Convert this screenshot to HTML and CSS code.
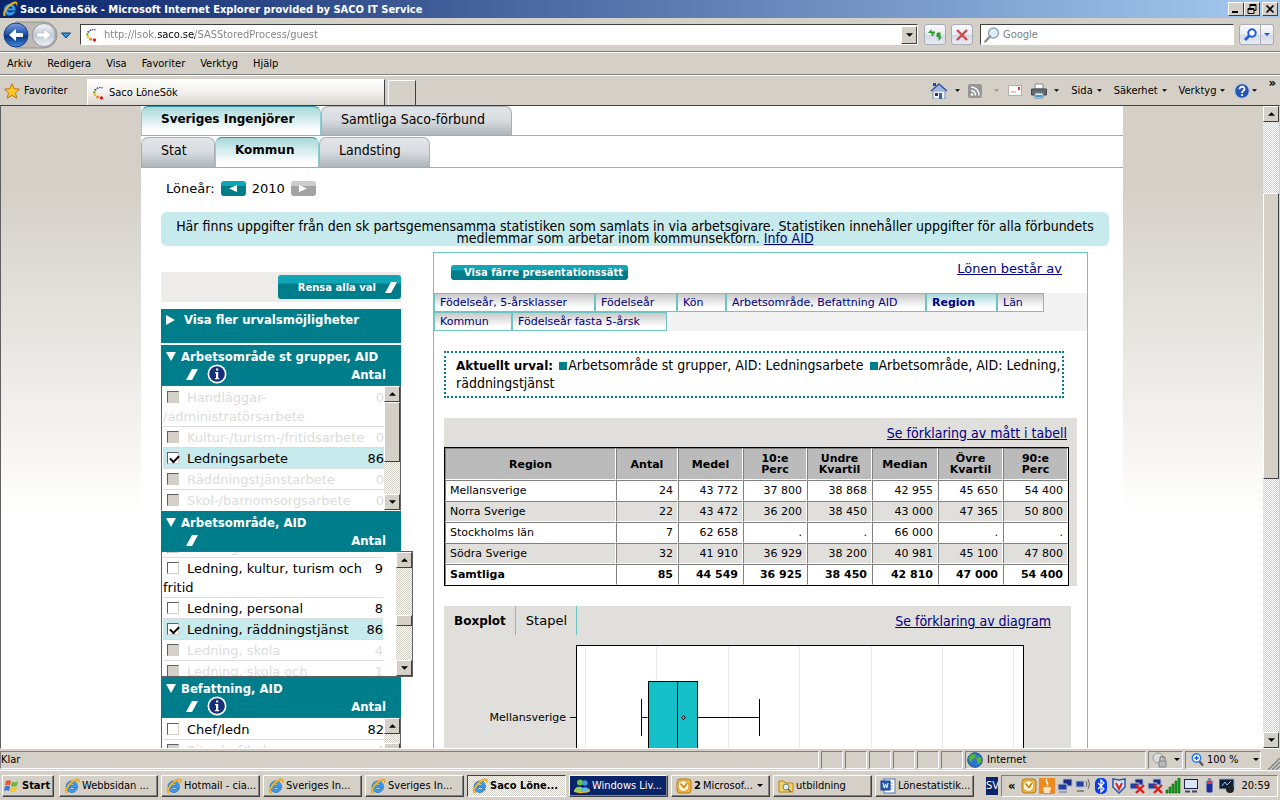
FILE: index.html
```html
<!DOCTYPE html>
<html lang="sv">
<head>
<meta charset="utf-8">
<title>Saco LöneSök</title>
<link rel="stylesheet" href="styles.css">
</head>
<body>
<svg class="defs" aria-hidden="true">
  <defs>
    <linearGradient id="navblue" x1="0" y1="0" x2="0" y2="1"><stop offset="0" stop-color="#7ba0dc"/><stop offset=".45" stop-color="#2355ad"/><stop offset=".55" stop-color="#0b3684"/><stop offset="1" stop-color="#3f8be0"/></linearGradient>
    <linearGradient id="navgray" x1="0" y1="0" x2="0" y2="1"><stop offset="0" stop-color="#f4f6fa"/><stop offset=".5" stop-color="#c3cad6"/><stop offset="1" stop-color="#eef2f8"/></linearGradient>
    <symbol id="ie" viewBox="0 0 16 16">
      <path d="M13.500 9.500H5.500c.2 1.300 1.200 2 2.500 2 1 0 1.800-.3 2.300-.9h3C12.500 13 10.500 14.500 8 14.500c-3.500 0-6-2.400-6-5.800S4.500 3 8 3s5.700 2.500 5.500 6.500zM5.600 7.300h4.800C10.200 6.200 9.300 5.600 8 5.600s-2.200.6-2.400 1.700z" fill="#3a9cee" stroke="#1660b0" stroke-width=".6"/>
      <path d="M1.800 14.800C-.4 12.500 4 5 9 2.200 12 .5 15.300.2 15.300 2.400c0 .8-.3 1.700-.8 2.600.3-1.500 0-2.500-1.200-2.500C10 2.500 3.300 9 2.800 12.800c-.1.900.2 1.500 1 1.700-.6.600-1.400.8-2 .3z" fill="#f5bd2a" stroke="#c98a10" stroke-width=".4"/>
    </symbol>
    <symbol id="saco" viewBox="0 0 14 14">
      <circle cx="10" cy="1.700" r=".7" fill="#4a2a7a"/><circle cx="7.800" cy="1.600" r=".8" fill="#63308c"/><circle cx="5.500" cy="2.200" r=".9" fill="#2b56a8"/><circle cx="3.400" cy="3.800" r="1.100" fill="#2e7d4a"/><circle cx="2.300" cy="6.400" r="1.200" fill="#6aa02c"/><circle cx="3" cy="9" r="1.300" fill="#f0c020"/><circle cx="5.600" cy="11" r="1.500" fill="#ee7a1c"/><circle cx="9.500" cy="12" r="1.700" fill="#d81e1e"/>
    </symbol>
    <symbol id="info" viewBox="0 0 20 20"><circle cx="10" cy="10" r="9.500" fill="#fff"/><circle cx="10" cy="10" r="7.800" fill="#152f78"/><path d="M9 4.600h2.200v2H9zM8 8h3.200v6h1v1.200H7.800V14H9V9.200H8z" fill="#fff"/></symbol>
    <symbol id="eraser" viewBox="0 0 12 11"><path d="M6 0h6L6 11H0z" fill="#fff"/></symbol>
    <symbol id="lens" viewBox="0 0 16 16"><circle cx="9.500" cy="6" r="5" fill="#dcecf8" stroke="#8fa6b8" stroke-width="1.400"/><path d="M6 9.500L1.300 14.500" stroke="#8a8a8a" stroke-width="2.400" stroke-linecap="round"/></symbol>
    <symbol id="up" viewBox="0 0 8 4"><path d="M4 0l4 4H0z"/></symbol>
    <symbol id="down" viewBox="0 0 8 4"><path d="M0 0h8L4 4z"/></symbol>
    <symbol id="outlook" viewBox="0 0 16 16"><rect x="1" y="1" width="14" height="14" rx="3" fill="#f0b440" stroke="#b87a18"/><circle cx="7.500" cy="8" r="5.500" fill="#fff3cf" stroke="#d89a30"/><path d="M4.500 5.500L8 9.500l3-4.500" fill="none" stroke="#c47d10" stroke-width="1.500"/></symbol>
    <symbol id="net" viewBox="0 0 16 16"><path d="M6 1h9v7H6z" fill="#182c86" stroke="#a9b8d8"/><path d="M1 6h9v6H1z" fill="#24409c" stroke="#b9c4dc"/><path d="M2 13h8v2H2z" fill="#9aa3b5"/></symbol>
    <symbol id="netoff" viewBox="0 0 16 16"><path d="M6 1h8v6H6z" fill="#182c86" stroke="#a9b8d8"/><path d="M1 5h9v6H1z" fill="#24409c" stroke="#b9c4dc"/><path d="M7 7l8 8M15 7l-8 8" stroke="#e01c1c" stroke-width="2.400"/></symbol>
  </defs>
</svg>

<div class="window">
  <header class="titlebar">
    <svg class="ico16"><use href="#ie"/></svg>
    <h1 class="title">Saco LöneSök - Microsoft Internet Explorer provided by SACO IT Service</h1>
    <div class="winbtns">
      <button class="wbtn" aria-label="Minimera"><svg width="10" height="10" viewBox="0 0 10 10"><path d="M1 7h6v2H1z"/></svg></button>
      <button class="wbtn" aria-label="Återställ"><svg width="10" height="10" viewBox="0 0 10 10"><path d="M3 .5h6v6H7M3 1.500h6M1 4.500h6v5H1zM1 5.500h6M3 0v4" fill="none" stroke="#000"/></svg></button>
      <button class="wbtn wclose" aria-label="Stäng"><svg width="10" height="10" viewBox="0 0 10 10"><path d="M1.500 1.500l7 7M8.500 1.500l-7 7" stroke="#000" stroke-width="1.600"/></svg></button>
    </div>
  </header>

  <div class="addressbar">
    <div class="nav">
      <svg class="navart" width="72" height="28" viewBox="0 0 72 28" aria-hidden="true">
        <path d="M14 1h28a13 13 0 0 1 0 26H14z" fill="#bdb9b2" stroke="#98948d"/>
        <circle cx="14" cy="14" r="12" fill="url(#navblue)" stroke="#1b3f86"/>
        <path d="M7 14l7-6v4h7v4h-7v4z" fill="#fff"/>
        <circle cx="42" cy="14" r="11.500" fill="url(#navgray)" stroke="#8f96a3"/>
        <path d="M49 14l-7-6v4h-7v4h7v4z" fill="#fff" stroke="#a9b1be" stroke-width=".5"/>
        <path d="M59.500 12h9L64 17z" fill="#2aa0e0" stroke="#123a80"/>
      </svg>
    </div>
    <div class="field addr">
      <svg class="ico14"><use href="#saco"/></svg>
      <input class="url" type="text" aria-label="Adress" value="http://lsok.saco.se/SASStoredProcess/guest">
      <button class="drop" aria-label="Visa adresser"><svg width="7" height="4"><use href="#down"/></svg></button>
    </div>
    <button class="glass" aria-label="Uppdatera"><svg width="16" height="16" viewBox="0 0 16 16"><path d="M1 6l3.500-4v2.500H8v2H6.500V9h-2V6zM15 10l-3.500 4v-2.500V10h-2V7.500c0-1.500 1-2 2-2h2V10z" fill="#2c9a2c"/></svg></button>
    <button class="glass" aria-label="Stoppa"><svg width="14" height="14" viewBox="0 0 14 14"><path d="M2 2l10 10M12 2L2 12" stroke="#d04848" stroke-width="2.400"/></svg></button>
    <div class="field search">
      <svg class="ico16"><use href="#lens"/></svg>
      <input class="query" type="search" aria-label="Sök" placeholder="Google">
    </div>
    <div class="searchbtns">
      <button class="glass" aria-label="Sök"><svg width="13" height="13" viewBox="0 0 13 13"><circle cx="8" cy="5" r="3.700" fill="#fff" stroke="#1a5ae0" stroke-width="2"/><path d="M5 8l-4 4" stroke="#1a5ae0" stroke-width="2.600"/></svg></button><button class="glass narrow" aria-label="Sökalternativ"><svg width="6" height="3" class="bluefill"><use href="#down"/></svg></button>
    </div>
  </div>

  <nav class="menubar" aria-label="Meny">
    <button>Arkiv</button><button>Redigera</button><button>Visa</button><button>Favoriter</button><button>Verktyg</button><button>Hjälp</button>
  </nav>

  <div class="tabbar">
    <button class="fav"><svg class="ico16" viewBox="0 0 16 16"><path d="M8 .8l2.200 4.900 5.200.5-3.900 3.600 1.200 5.400L8 12.400l-4.700 2.800 1.200-5.400L.6 6.200l5.200-.5z" fill="#ffc627" stroke="#b9790c"/></svg>Favoriter</button>
    <div class="btab"><svg class="ico14"><use href="#saco"/></svg>Saco LöneSök</div>
    <div class="newtab"></div>
    <div class="commands">
      <svg width="18" height="16" viewBox="0 0 18 16"><path d="M3 8h12v8H3z" fill="#eef2fa" stroke="#7d8fb5"/><path d="M1 8l8-7 8 7" fill="#9cb6e0" stroke="#3a5596" stroke-width="1.500"/><path d="M9 10h3v6H9z" fill="#2f66ae"/><path d="M5 10h3v3H5z" fill="#335"/><path d="M3 0h3v3H3z" fill="#24c"/></svg>
      <svg class="caret" width="5" height="3"><use href="#down"/></svg>
      <svg class="rss" width="14" height="14" viewBox="0 0 14 14"><rect width="14" height="14" rx="2" fill="#969696"/><circle cx="4" cy="10.500" r="1.300" fill="#fff"/><path d="M3 6.500a4.500 4.500 0 0 1 4.500 5M3 3a8 8 0 0 1 8 8.500" fill="none" stroke="#fff" stroke-width="1.500"/></svg>
      <svg class="caret dim" width="5" height="3"><use href="#down"/></svg>
      <svg class="mail" width="14" height="11" viewBox="0 0 14 11"><rect x=".5" y=".5" width="13" height="10" fill="#fafafa" stroke="#b5b0a8"/><path d="M10 2h2v3h-2z" fill="#d33"/><path d="M3 7h5" stroke="#aaa"/></svg>
      <svg class="print" width="16" height="16" viewBox="0 0 16 16"><path d="M4 1h8v5H4z" fill="#fff" stroke="#888"/><path d="M.5 6h15v6H.5z" fill="#646b76" stroke="#444"/><path d="M4 10h8v5H4z" fill="#e4f2f7" stroke="#6d8a96"/><path d="M5 12h6v2H5z" fill="#3a9ad0"/></svg>
      <svg class="caret" width="5" height="3"><use href="#down"/></svg>
      <button class="cmd">Sida<svg width="5" height="3"><use href="#down"/></svg></button>
      <button class="cmd">Säkerhet<svg width="5" height="3"><use href="#down"/></svg></button>
      <button class="cmd">Verktyg<svg width="5" height="3"><use href="#down"/></svg></button>
      <button class="cmd help" aria-label="Hjälp"><svg width="16" height="16" viewBox="0 0 16 16"><circle cx="8" cy="8" r="7.300" fill="#2456b8" stroke="#c3cde0"/><path d="M5.500 6.300C5.500 2.800 10.800 3 10.500 6.200 10.300 8 8 7.900 8 10M8 11.300v1.800" fill="none" stroke="#fff" stroke-width="1.800"/></svg><svg width="5" height="3"><use href="#down"/></svg></button>
      <span class="chev">»</span>
    </div>
  </div>

  <div class="viewport">
    <div class="canvas">
      <main class="page">
        <nav class="tabs" aria-label="Förbund">
          <a href="#" class="tab t180 on">Sveriges Ingenjörer</a><a href="#" class="tab t190">Samtliga Saco-förbund</a>
        </nav>
        <nav class="tabs second" aria-label="Sektor">
          <a href="#" class="tab t74">Stat</a><a href="#" class="tab t104 on">Kommun</a><a href="#" class="tab t111">Landsting</a>
        </nav>
        <div class="year">
          <span>Löneår:</span>
          <button class="step" aria-label="Föregående år"><svg width="8" height="8" viewBox="0 0 8 8"><path d="M8 0v7L0 3.500z" fill="#fff"/></svg></button>
          <span>2010</span>
          <button class="step off" aria-label="Nästa år" disabled><svg width="8" height="8" viewBox="0 0 8 8"><path d="M0 0v7l8-3.500z" fill="#fff"/></svg></button>
        </div>
        <p class="notice">Här finns uppgifter från den sk partsgemensamma statistiken som samlats in via arbetsgivare. Statistiken innehåller uppgifter för alla förbundets<br>medlemmar som arbetar inom kommunsektorn. <a href="#">Info AID</a></p>

        <div class="columns">
          <aside class="filters">
            <div class="clearbar"><button class="clear">Rensa alla val<svg width="12" height="11"><use href="#eraser"/></svg></button></div>
            <button class="more"><svg width="9" height="10" viewBox="0 0 9 10"><path d="M0 0l9 5-9 5z" fill="#fff"/></svg>Visa fler urvalsmöjligheter</button>

            <section>
              <div class="fhead"><h2><svg width="10" height="9" viewBox="0 0 10 9"><path d="M0 0h10L5 9z" fill="#fff"/></svg>Arbetsområde st grupper, AID</h2><div class="fsub"><svg width="12" height="11"><use href="#eraser"/></svg><svg width="20" height="20"><use href="#info"/></svg><span>Antal</span></div></div>
              <div class="list">
                <ul>
                  <li class="dis"><label><input type="checkbox" disabled>Handläggar-<wbr>/administratörsarbete</label><span>0</span></li>
                  <li class="dis"><label><input type="checkbox" disabled>Kultur-/turism-/fritidsarbete</label><span>0</span></li>
                  <li class="sel"><label><input type="checkbox" checked>Ledningsarbete</label><span>86</span></li>
                  <li class="dis"><label><input type="checkbox" disabled>Räddningstjänstarbete</label><span>0</span></li>
                  <li class="dis"><label><input type="checkbox" disabled>Skol-/barnomsorgsarbete</label><span>0</span></li>
                </ul>
                <div class="sb" aria-hidden="true"><i class="sbb"><svg width="7" height="4"><use href="#up"/></svg></i><i class="thumb big"></i><i class="fill"></i><i class="sbb"><svg width="7" height="4"><use href="#down"/></svg></i></div>
              </div>
            </section>

            <section>
              <div class="fhead"><h2><svg width="10" height="9" viewBox="0 0 10 9"><path d="M0 0h10L5 9z" fill="#fff"/></svg>Arbetsområde, AID</h2><div class="fsub"><svg width="12" height="11"><use href="#eraser"/></svg><span>Antal</span></div></div>
              <div class="list wide">
                <ul class="scrolled">
                  <li class="dis"><label><input type="checkbox" disabled>Ledning, information</label></li>
                  <li><label><input type="checkbox">Ledning, kultur, turism och fritid</label><span>9</span></li>
                  <li><label><input type="checkbox">Ledning, personal</label><span>8</span></li>
                  <li class="sel"><label><input type="checkbox" checked>Ledning, räddningstjänst</label><span>86</span></li>
                  <li class="dis"><label><input type="checkbox" disabled>Ledning, skola</label><span>4</span></li>
                  <li class="dis"><label><input type="checkbox" disabled>Ledning, skola och</label><span>1</span></li>
                </ul>
                <div class="sb" aria-hidden="true"><i class="sbb"><svg width="7" height="4"><use href="#up"/></svg></i><i class="fill"></i><i class="thumb small"></i><i class="fill after"></i><i class="sbb"><svg width="7" height="4"><use href="#down"/></svg></i></div>
              </div>
            </section>

            <section>
              <div class="fhead"><h2><svg width="10" height="9" viewBox="0 0 10 9"><path d="M0 0h10L5 9z" fill="#fff"/></svg>Befattning, AID</h2><div class="fsub"><svg width="12" height="11"><use href="#eraser"/></svg><svg width="20" height="20"><use href="#info"/></svg><span>Antal</span></div></div>
              <div class="list">
                <ul>
                  <li><label><input type="checkbox">Chef/ledn</label><span>82</span></li>
                  <li class="dis"><label><input type="checkbox" disabled>Bitr chef/ledn</label><span>4</span></li>
                </ul>
                <div class="sb" aria-hidden="true"><i class="sbb"><svg width="7" height="4"><use href="#up"/></svg></i><i class="fill gap"></i><i class="thumb big"></i></div>
              </div>
            </section>
          </aside>

          <section class="panel">
            <div class="ptop"><button class="fewer">Visa färre presentationssätt</button><a href="#">Lönen består av</a></div>
            <nav class="subtabs" aria-label="Presentationssätt">
              <a href="#" class="w161">Födelseår, 5-årsklasser</a><a href="#" class="w82">Födelseår</a><a href="#" class="w49">Kön</a><a href="#" class="w200">Arbetsområde, Befattning AID</a><a href="#" class="w71 on">Region</a><a href="#" class="w47">Län</a><a href="#" class="w78">Kommun</a><a href="#" class="w155">Födelseår fasta 5-årsk</a>
            </nav>
            <p class="current"><b>Aktuellt urval:</b> <i class="sq"></i>Arbetsområde st grupper, AID: Ledningsarbete <i class="sq"></i>Arbetsområde, AID: Ledning,<br>räddningstjänst</p>
            <div class="tablebox">
              <a href="#">Se förklaring av mått i tabell</a>
              <table>
                <colgroup><col><col class="c62"><col class="c65"><col class="c64"><col class="c65"><col class="c66"><col class="c65"><col class="c65"></colgroup>
                <thead><tr><th>Region</th><th>Antal</th><th>Medel</th><th>10:e Perc</th><th>Undre Kvartil</th><th>Median</th><th>Övre Kvartil</th><th>90:e Perc</th></tr></thead>
                <tbody>
                  <tr><td>Mellansverige</td><td>24</td><td>43 772</td><td>37 800</td><td>38 868</td><td>42 955</td><td>45 650</td><td>54 400</td></tr>
                  <tr><td>Norra Sverige</td><td>22</td><td>43 472</td><td>36 200</td><td>38 450</td><td>43 000</td><td>47 365</td><td>50 800</td></tr>
                  <tr><td>Stockholms län</td><td>7</td><td>62 658</td><td>.</td><td>.</td><td>66 000</td><td>.</td><td>.</td></tr>
                  <tr><td>Södra Sverige</td><td>32</td><td>41 910</td><td>36 929</td><td>38 200</td><td>40 981</td><td>45 100</td><td>47 800</td></tr>
                </tbody>
                <tfoot><tr><td>Samtliga</td><td>85</td><td>44 549</td><td>36 925</td><td>38 450</td><td>42 810</td><td>47 000</td><td>54 400</td></tr></tfoot>
              </table>
            </div>
            <div class="chartbox">
              <div class="charttop"><button class="on">Boxplot</button><button>Stapel</button><a href="#">Se förklaring av diagram</a></div>
              <svg class="chart" width="627" height="220" viewBox="0 0 627 220" role="img" aria-label="Boxplot Mellansverige">
                <rect x="132.500" y="10.500" width="447" height="230" fill="#fff" stroke="#000"/>
                <path d="M141.500 11v209M212.500 11v209M284.500 11v209M355.500 11v209M427.500 11v209M498.500 11v209M569.500 11v209" stroke="#e8e8e8"/>
                <path d="M126 82.500h6M197.500 64v37M197.500 82.500h6M254 82.500h61M315.500 64v37" stroke="#000"/>
                <rect x="204.500" y="46.500" width="49" height="72" fill="#15c0c9" stroke="#000"/>
                <path d="M233.500 46v72" stroke="#000"/>
                <path d="M239.500 80.500l2 2-2 2-2-2z" fill="none" stroke="#000"/>
                <text x="122" y="86" text-anchor="end">Mellansverige</text>
              </svg>
            </div>
          </section>
        </div>
      </main>
    </div>
    <div class="sb main" aria-hidden="true"><i class="sbb"><svg width="7" height="4"><use href="#up"/></svg></i><i class="fill top"></i><i class="thumb huge"></i><i class="fill"></i><i class="sbb"><svg width="7" height="4"><use href="#down"/></svg></i></div>
  </div>

  <footer class="status">
    <div class="pane grow">Klar</div><div class="pane p22"></div><div class="pane p22"></div><div class="pane p22"></div><div class="pane p22"></div><div class="pane p22"></div><div class="pane p22"></div>
    <div class="pane zone"><svg class="ico16" viewBox="0 0 16 16"><circle cx="8" cy="8" r="7.300" fill="#2a75cf" stroke="#1d4e90"/><path d="M3 3c3-2 6-1 6 1S6 6 5 9 2 8 1.500 6zM10 5c2-1 4 0 4.500 2s-1 5-3 5-1-3-2-4 0-3 .5-3z" fill="#58b33c"/></svg>Internet</div>
    <div class="pane lock"><svg class="ico16" viewBox="0 0 16 16"><circle cx="6" cy="6" r="5" fill="#ddd" stroke="#999"/><path d="M8 9v-2a2.500 2.500 0 0 1 5 0v2" fill="none" stroke="#888" stroke-width="1.500"/><path d="M7 9h7v6H7z" fill="#b9b9b9" stroke="#888"/></svg><svg width="6" height="3"><use href="#down"/></svg></div>
    <div class="pane zoom"><svg width="13" height="14" viewBox="0 0 13 14"><circle cx="5.500" cy="5" r="4.200" fill="#e6f2ff" stroke="#2c7be0" stroke-width="1.500"/><path d="M3.500 5h4M5.500 3v4" stroke="#1a5ae0" stroke-width="1.300"/><path d="M8.500 8.500l3.500 4" stroke="#555" stroke-width="2.200"/></svg><span>100 %</span><svg width="6" height="3"><use href="#down"/></svg></div>
    <svg class="grip" width="12" height="12" viewBox="0 0 12 12"><path d="M0 12L12 0M4 12l8-8M8 12l4-4" stroke="#808080" stroke-width="1.500"/></svg>
  </footer>

  <div class="taskbar">
    <button class="start"><svg class="ico16" viewBox="0 0 16 16"><path d="M2 3c2-1.300 3.500-1 5 0L6 7.500c-1.500-1-3-1-5 0z" fill="#e8532b"/><path d="M8 3.500c2 1 4 1 6 0L13 8c-2 1-4 1-6 0z" fill="#6fb83a"/><path d="M1 8.500c2-1.200 3.500-1 5 0L5 13c-1.500-1-3-1-5 0z" fill="#3a76d8"/><path d="M7 9c2 1 4 1 6 0l-1 4.500c-2 1-4 1-6 0z" fill="#f7c52c"/></svg>Start</button>
    <button class="task"><svg class="ico16"><use href="#ie"/></svg>Webbsidan ...</button>
    <button class="task"><svg class="ico16"><use href="#ie"/></svg>Hotmail - cia...</button>
    <button class="task"><svg class="ico16"><use href="#ie"/></svg>Sveriges In...</button>
    <button class="task"><svg class="ico16"><use href="#ie"/></svg>Sveriges In...</button>
    <button class="task pressed"><svg class="ico16"><use href="#ie"/></svg>Saco Löne...</button>
    <button class="task alert"><svg class="ico16" viewBox="0 0 16 16"><circle cx="6" cy="4.500" r="3" fill="#6cc04a"/><circle cx="11" cy="5" r="2.700" fill="#3a9de0"/><path d="M0 13c1-5 8-6 10-1 0 2-8 3-10 1z" fill="#8ad05c"/><path d="M7 13c0-5 8-5 9 0-1 2-8 2-9 0z" fill="#5ab8f0"/><path d="M0 13c4 2 12 2 16-1" stroke="#f5b32a" stroke-width="1.500" fill="none"/></svg>Windows Liv...</button>
    <button class="task"><svg class="ico16"><use href="#outlook"/></svg><b>2</b> Microsof...<svg class="tcaret" width="6" height="3"><use href="#down"/></svg></button>
    <button class="task"><svg class="ico16" viewBox="0 0 16 16"><path d="M1 3h5l1 2h8v9H1z" fill="#f6d365" stroke="#b8860b"/><circle cx="8" cy="9" r="3" fill="#d8eefc" stroke="#777"/><path d="M10 11l3 3" stroke="#666" stroke-width="1.500"/></svg>utbildning</button>
    <button class="task"><svg class="ico16" viewBox="0 0 16 16"><rect x="4" y="1" width="11" height="14" fill="#fff" stroke="#5577b5"/><path d="M7 5h6M7 8h6M7 11h6" stroke="#9ab"/><rect x="1" y="3" width="9" height="9" fill="#2b5cb8" stroke="#163c85"/><path d="M3 5l1.300 5L5.500 6l1.300 4L8 5" stroke="#fff" fill="none"/></svg>Lönestatistik...</button>
    <span class="lang">SV</span>
    <div class="tray">
      <span class="chev2">«</span>
      <svg class="ico16"><use href="#outlook"/></svg>
      <svg class="ico16" viewBox="0 0 16 16"><rect width="16" height="16" rx="1" fill="#ee8a1e"/><path d="M8 1c-3 3 3 4 0 7M4 10h8M4.500 12h7M5 14h6" stroke="#fff" fill="none" stroke-width="1.300"/></svg>
      <svg class="ico16"><use href="#net"/></svg>
      <svg class="ico16" viewBox="0 0 16 16"><path d="M1 3h8v6H1z" fill="#24409c" stroke="#a9b8d8"/><path d="M2 12h7v2H2z" fill="#889"/><path d="M11 3q2 3 0 6M13 1q3 5 0 10" fill="none" stroke="#666"/></svg>
      <svg class="ico16" viewBox="0 0 16 16"><rect x="2" y="0" width="12" height="16" rx="5" fill="#0a3cf0"/><path d="M5 5l6 6-3 3V2l3 3-6 6" fill="none" stroke="#fff" stroke-width="1.200"/></svg>
      <svg class="ico16" viewBox="0 0 16 16"><path d="M2 1l6 1 6-1v8l-6 6-6-6z" fill="#d8e4f4" stroke="#2f5ba8" stroke-width="1.600"/><path d="M5 5l3 6 3-6" stroke="#d22" stroke-width="2" fill="none"/></svg>
      <svg class="ico16"><use href="#netoff"/></svg>
      <svg class="ico16"><use href="#netoff"/></svg>
      <svg class="ico16" viewBox="0 0 16 16"><path d="M1 12h2v3H1zM4 9h2v6H4zM7 6h2v9H7zM10 3h2v12h-2zM13 0h2v15h-2z" fill="#16a81e" stroke="#075c0c" stroke-width=".6"/></svg>
      <svg class="ico16" viewBox="0 0 16 16"><rect x="1.500" y="1.500" width="13" height="9" fill="#d8e6f8" stroke="#224"/><path d="M2 13.500h5M9 13.500h5" stroke="#446" stroke-width="2"/></svg>
      <svg class="ico16" viewBox="0 0 16 16"><rect x="5" y="2" width="7" height="13" rx="2" fill="#1c2f9a" stroke="#ccc"/><path d="M6 3h5v3H6z" fill="#e33"/><path d="M7 0h3v2H7z" fill="#888"/></svg>
      <svg class="ico16" viewBox="0 0 16 16"><path d="M0 1h15v10H0z" fill="#111c38" stroke="#8fb0c8"/><path d="M3 8l3-4 2 3 4-4" stroke="#7fd0f0" fill="none"/><circle cx="11" cy="11" r="4" fill="#222"/></svg>
      <time>20:59</time>
    </div>
  </div>
</div>
</body>
</html>
```
FILE: styles.css
```css
* { box-sizing: border-box; }
body { margin: 0; font-family: "DejaVu Sans", Verdana, sans-serif; font-size: 13px; color: #000; }
button, input { font: inherit; color: inherit; margin: 0; padding: 0; border: 0; background: none; border-radius: 0; }
svg { flex: none; display: block; }
a { color: #000080; }
.defs { position: absolute; width: 0; height: 0; }
.ico16 { width: 16px; height: 16px; }
.ico14 { width: 14px; height: 14px; }

.window { display: flex; flex-direction: column; height: 100vh; overflow: hidden; background: #d4d0c8; }
.titlebar, .addressbar, .menubar, .tabbar, .status, .taskbar { flex: none; display: flex; align-items: center; font-family: "DejaVu Sans Condensed", Tahoma, sans-serif; font-size: 11px; white-space: nowrap; }

/* Title bar */
.titlebar { height: 18px; padding: 0 2px; gap: 2px; background: linear-gradient(90deg, #0a246a, #a6caf0); color: #fff; }
.title { margin: 0; flex: 1; font-size: 11px; font-weight: bold; }
.winbtns { display: flex; }
.wbtn { width: 16px; height: 14px; display: flex; align-items: center; justify-content: center; background: #d4d0c8; border: 1px solid; border-color: #fff #404040 #404040 #fff; }
.wclose { margin-left: 2px; }

/* Address bar */
.addressbar { height: 34px; padding: 0 6px 0 2px; border-bottom: 1px solid #808080; }
.nav { width: 78px; }
.field { display: flex; align-items: center; height: 21px; background: #fff; border: 1px solid; border-color: #404040 #fff #fff #404040; }
.addr { flex: 1; padding-left: 4px; gap: 5px; margin-right: 6px; }
.url { flex: 1; min-width: 0; color: transparent; background: linear-gradient(90deg, #808080 54px, #000 54px, #000 91px, #808080 91px); background-clip: text; -webkit-background-clip: text; }
.drop { width: 16px; height: 18px; display: flex; align-items: center; justify-content: center; background: #d4d0c8; border: 1px solid; border-color: #fff #404040 #404040 #fff; }
.glass { width: 22px; height: 21px; margin-right: 5px; display: flex; align-items: center; justify-content: center; border: 1px solid #a9abb5; border-radius: 3px; background: linear-gradient(#fafafc, #e9ebf2 50%, #d3d7e4 51%, #e8ecf4); }
.search { width: 254px; padding-left: 3px; gap: 3px; margin: 0 5px 0 2px; }
.query { flex: 1; min-width: 0; }
.query::placeholder { color: #808080; opacity: 1; }
.searchbtns { display: flex; }
.searchbtns .glass { margin: 0; border-radius: 3px 0 0 3px; }
.searchbtns .narrow { width: 13px; border-left: 0; border-radius: 0 3px 3px 0; }
.bluefill { fill: #1a5ae0; }

.menubar { height: 23px; padding-left: 7px; gap: 15px; border-top: 1px solid #fff; border-bottom: 1px solid #808080; }
.tabbar { height: 30px; border-top: 1px solid #fff; align-items: stretch; }
.fav { display: flex; align-items: center; gap: 4px; width: 87px; padding-left: 4px; }
.btab { display: flex; align-items: center; gap: 3px; width: 298px; margin-top: 3px; padding-left: 4px; background: linear-gradient(#fdfdfc, #f2f0ed 50%, #d9d5ce); border: 1px solid #fff; border-right: 1px solid #404040; border-bottom: 0; }
.newtab { width: 28px; margin: 4px 0 0 3px; border: 1px solid #fff; border-right: 1px solid #404040; border-bottom: 0; }
.commands { margin-left: auto; display: flex; align-items: center; padding-right: 4px; }
.caret { margin-left: 7px; }
.dim { fill: #909090; margin-left: 12px; }
.rss { margin-left: 8px; }
.mail { margin-left: 9px; }
.print { margin-left: 9px; }
.cmd { display: flex; align-items: center; gap: 4px; margin-left: 12px; }
.help { gap: 2px; margin-left: 9px; }
.chev { align-self: flex-start; margin-left: 11px; font-size: 13px; font-weight: bold; line-height: 13px; }

/* Viewport */
.viewport { flex: 1; min-height: 0; display: flex; border: 1px solid; border-color: #404040 #d4d0c8 #fff #606060; overflow: hidden; }
.canvas { flex: 1; min-width: 0; overflow: hidden; background: linear-gradient(#d4d0c8 80px, #fff 410px); }
.page { width: 982px; margin: 0 auto; min-height: 100%; background: #fff; }

/* Main tabs */
.tabs { display: flex; height: 30px; border-bottom: 1px solid #6cc5c3; }
.second { margin-top: 1px; height: 31px; }
.tab { padding: 4px 0 0 19px; font: 14px/17px "DejaVu Sans Condensed", Verdana, sans-serif; color: #000; text-decoration: none; white-space: nowrap; border: 1px solid #a9b1b6; border-bottom: 0; border-radius: 7px 7px 0 0; background: linear-gradient(#e2e6e9, #d9dde1 45%, #adb5ba); }
.tab.on { font: bold 12px/17px "DejaVu Sans", Verdana, sans-serif; background: linear-gradient(#a9d9db, #fff 85%); border-color: #36939f #8ccdd1 #8ccdd1; }
.t180 { width: 180px; }
.t190 { width: 191px; }
.t74 { width: 74px; }
.t104 { width: 104px; }
.t111 { width: 111px; }

.year { display: flex; align-items: center; gap: 6px; padding: 13px 0 0 25px; height: 28px; line-height: 16px; }
.step { width: 25px; height: 15px; display: flex; align-items: center; justify-content: center; border-radius: 3px; background: linear-gradient(#0ea5b5 5px, #007d8b 5px); }
.step.off { background: linear-gradient(#cdcdcd 5px, #a3a3a3 5px); }

.notice { margin: 16px 14px 0 20px; padding: 8px 0 2px; border-radius: 6px; background: #c7eaec; text-align: center; font: 14px/12px "DejaVu Sans Condensed", Verdana, sans-serif; white-space: nowrap; height: 34px; }

/* Filters */
.columns { display: flex; padding: 6px 35px 0 20px; gap: 32px; align-items: flex-start; }
.filters { width: 240px; flex: none; padding-top: 20px; }
.clearbar { display: flex; justify-content: flex-end; height: 30px; padding-top: 3px; background: #edece8; }
.clear { display: flex; align-items: center; justify-content: flex-end; gap: 9px; width: 123px; height: 24px; padding-right: 4px; border-radius: 3px; color: #fff; font-weight: bold; font-size: 10px; background: linear-gradient(#11a6b6 8px, #007d8b 9px); }
.more { display: flex; align-items: flex-start; gap: 9px; width: 100%; height: 34px; margin-top: 7px; padding: 4px 5px; background: #007d8b; color: #fff; font: bold 13px/14px "DejaVu Sans Condensed", Tahoma, sans-serif; white-space: nowrap; }
.more svg { margin-top: 2px; }
.more + section { margin-top: 2px; }
.fhead { height: 40px; padding: 4px 15px 0 5px; background: #007d8b; color: #fff; font: bold 13px/15px "DejaVu Sans Condensed", Tahoma, sans-serif; white-space: nowrap; }
.fhead h2 { display: flex; align-items: center; gap: 5px; margin: 0; font: inherit; }
.fsub { display: flex; align-items: center; gap: 9px; height: 20px; padding-left: 20px; }
.fsub span { margin-left: auto; }
.list { display: flex; width: 240px; height: 126px; border: 1px solid #606060; border-bottom-color: #fff; overflow: hidden; }
.wide { width: 252px; border-bottom-color: #606060; }
.list ul { flex: 1; margin: 1px 0 0 1px; padding: 0; list-style: none; }
.wide ul { margin-right: 13px; }
.list .scrolled { margin-top: -15px; }
.list li { display: flex; justify-content: space-between; min-height: 21px; padding-top: 1px; line-height: 19px; border-bottom: 1px solid #dcdcdc; }
.list li label { flex: 1; }
.list li span { flex: none; }
.dis { color: #dcdcdc; }
.sel { background: #c7eaec; }
.list input { appearance: none; display: inline-block; width: 12px; height: 12px; margin: 0 8px 0 4px; vertical-align: -1px; background: #fff; border: 1px solid; border-color: #606060 #d4d0c8 #d4d0c8 #606060; }
.list input:disabled { background: #d4d0c8; }
.list input:checked::before { content: ""; display: block; width: 7px; height: 4px; margin: 2px 0 0 2px; border: solid #000; border-width: 0 0 2px 2px; rotate: -45deg; }

/* Classic scroll bars */
.sb { flex: none; width: 16px; display: flex; flex-direction: column; background: repeating-conic-gradient(#fff 0 25%, #d4d0c8 0 50%) 0 0 / 2px 2px; }
.sbb, .thumb { flex: none; display: flex; align-items: center; justify-content: center; height: 16px; background: #d4d0c8; border: 1px solid; border-color: #fff #404040 #404040 #fff; }
.thumb.big { height: 60px; }
.thumb.small { height: 11px; }
.thumb.huge { height: 286px; }
.fill { flex: 1; }
.fill.after { flex: none; height: 34px; }
.fill.gap { flex: none; height: 9px; }
.fill.top { flex: none; height: 71px; }

/* Result panel */
.panel { flex: 1; min-width: 0; border: 1px solid #6cc5c3; border-bottom: 0; }
.ptop { display: flex; justify-content: space-between; align-items: flex-start; height: 40px; padding: 8px 25px 0 17px; line-height: 16px; }
.fewer { height: 15px; margin-top: 4px; padding: 0 5px 0 13px; border-radius: 3px; color: #fff; font: bold 10px/15px "DejaVu Sans", Verdana, sans-serif; white-space: nowrap; background: linear-gradient(#11a6b6 5px, #007d8b 6px); }
.subtabs { display: flex; flex-wrap: wrap; background: #f3f3f3; font-size: 11px; line-height: 17px; }
.subtabs a { flex: none; padding-left: 5px; border: 1px solid #6cc5c3; background: linear-gradient(#c9c9c9, #fff 80%); text-decoration: none; white-space: nowrap; }
.subtabs .on { background: linear-gradient(#a9d9db, #fff 80%); font-weight: bold; }
.w161 { width: 161px; } .w82 { width: 82px; } .w49 { width: 49px; } .w200 { width: 200px; }
.w71 { width: 71px; } .w47 { width: 47px; } .w78 { width: 78px; } .w155 { width: 155px; }
.current { margin: 20px 23px 0 10px; padding: 4px 0 4px 10px; border: 2px dotted #007d8b; font: 14px/17px "DejaVu Sans Condensed", Verdana, sans-serif; white-space: nowrap; }
.current b { font: bold 12px/17px "DejaVu Sans", Verdana, sans-serif; }
.sq { display: inline-block; width: 8px; height: 8px; margin: 0 1px 0 2px; background: #007d8b; }

.tablebox { display: flex; flex-direction: column; margin: 20px 10px 0; padding: 0 8px 0 0; background: #e0dfdb; }
.tablebox > a { align-self: flex-end; margin-right: 2px; padding-top: 7px; height: 29px; font: 14px/17px "DejaVu Sans Condensed", Verdana, sans-serif; }
table { width: 100%; table-layout: fixed; border-collapse: separate; border-spacing: 0; border: 1px solid #000; font-size: 11px; line-height: 11px; background: #fff; }
.c62 { width: 62px; } .c64 { width: 64px; } .c65 { width: 65px; } .c66 { width: 66px; }
th { height: 32px; padding: 0 6px; background: #bbb; }
td { height: 21px; padding: 0 4px; text-align: right; }
td:first-child { text-align: left; }
th, td { border: 1px solid; border-color: #808080 #fff #fff #808080; }
tbody tr:nth-child(even) { background: #e0dfdb; }
tfoot { font-weight: bold; }

.chartbox { margin: 20px 16px 0 10px; background: #e0dfdb; }
.charttop { display: flex; height: 29px; }
.charttop button { padding: 0 9px 0 10px; border-right: 1px solid #6cc5c3; }
.charttop .on { font-weight: bold; font-size: 12px; }
.charttop a { margin: 7px 20px 0 auto; font: 14px/17px "DejaVu Sans Condensed", Verdana, sans-serif; }
.chart { max-width: 100%; font-size: 11px; }

/* Status bar */
.status { height: 22px; gap: 2px; border-bottom: 1px solid #fff; }
.pane { display: flex; align-items: center; height: 18px; border: 1px solid; border-color: #808080 #fff #fff #808080; }
.grow { flex: 1; }
.p22 { width: 22px; }
.zone { width: 181px; gap: 4px; padding-left: 1px; }
.lock { width: 35px; gap: 6px; padding-left: 3px; }
.zoom { width: 76px; gap: 3px; padding-left: 5px; }
.zoom span { margin-right: 12px; }
.grip { margin-left: 5px; align-self: flex-end; }

/* Task bar */
.taskbar { height: 29px; padding: 0 2px; gap: 3px; }
.start, .task { display: flex; align-items: center; height: 22px; border: 1px solid; border-color: #fff #404040 #404040 #fff; box-shadow: inset -1px -1px #808080; }
.start { width: 52px; gap: 2px; padding-left: 1px; margin-right: 2px; font-weight: bold; }
.task { flex: 0 1 99px; min-width: 0; overflow: hidden; gap: 2px; padding-left: 4px; }
.pressed { font-weight: bold; border-color: #404040 #fff #fff #404040; box-shadow: none; background: repeating-conic-gradient(#fff 0 25%, #d4d0c8 0 50%) 0 0 / 2px 2px; }
.alert { background: #0a246a; color: #fff; }
.tcaret { margin-left: 2px; }
.lang { width: 12px; height: 18px; margin-left: 9px; overflow: hidden; background: #0a246a; color: #fff; line-height: 18px; }
.tray { flex: 1; display: flex; align-items: center; justify-content: flex-end; gap: 2px; height: 22px; padding-right: 7px; border: 1px solid; border-color: #808080 #fff #fff #808080; }
.chev2 { margin-right: 4px; font-size: 13px; font-weight: bold; }
.tray time { margin-left: 4px; }
```
